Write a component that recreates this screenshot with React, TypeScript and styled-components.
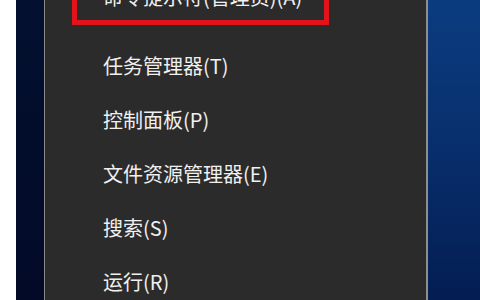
import React from "react";
import styled, { createGlobalStyle } from "styled-components";

const Global = createGlobalStyle`
  html, body { margin: 0; padding: 0; background: #ffffff; }
  #root { width: 480px; height: 300px; overflow: hidden; }
`;

const Screen = styled.div`
  display: flex;
  width: 480px;
  height: 300px;
  overflow: hidden;
  background: #ffffff;
`;

const PageMargin = styled.div`
  width: 16px;
  flex: none;
  background: #ffffff;
`;

const DesktopLeft = styled.div`
  width: 28px;
  flex: none;
  background: linear-gradient(180deg, #03102f 0%, #020a28 100%);
`;

const Menu = styled.div`
  width: 381px;
  flex: none;
  background: #2b2b2b;
  border-left: 1px solid #8a8a8a;
  border-right: 2px solid #8e8e8e;
  display: flex;
  flex-direction: column;
  font-family: "Noto Sans CJK SC", "Noto Sans", sans-serif;
  font-size: 20px;
  color: #f0f0f0;
`;

const DesktopRight = styled.div`
  flex: 1;
  background: linear-gradient(180deg, #0b3c80 0%, #08306e 45%, #041d52 100%);
`;

const MarkedItem = styled.div`
  box-sizing: border-box;
  margin-top: -32px;
  margin-left: 27px;
  width: 257px;
  height: 57px;
  border: 5px solid #e3131b;
  padding-left: 26px;
  line-height: 47px;
  white-space: nowrap;
`;

const Separator = styled.div`
  height: 1px;
  margin: 5px 16px 9px 17px;
  background: #7a7a7a;
`;

const Item = styled.div`
  height: 54px;
  line-height: 54px;
  padding-left: 58px;
  white-space: nowrap;
  flex: none;
`;

const items = ["任务管理器(T)", "控制面板(P)", "文件资源管理器(E)", "搜索(S)", "运行(R)"];

export default function App() {
  return (
    <>
      <Global />
      <Screen>
        <PageMargin />
        <DesktopLeft />
        <Menu>
          <MarkedItem>命令提示符(管理员)(A)</MarkedItem>
          <Separator />
          {items.map((t) => (
            <Item key={t}>{t}</Item>
          ))}
        </Menu>
        <DesktopRight />
      </Screen>
    </>
  );
}
